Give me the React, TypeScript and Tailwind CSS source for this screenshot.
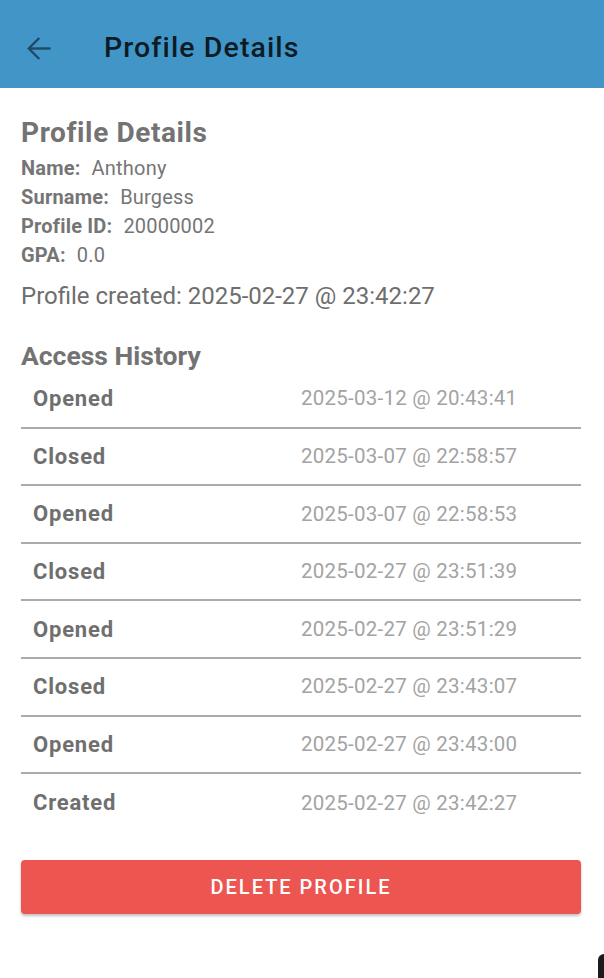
const history = [
  { action: 'Opened', at: '2025-03-12 @ 20:43:41' },
  { action: 'Closed', at: '2025-03-07 @ 22:58:57' },
  { action: 'Opened', at: '2025-03-07 @ 22:58:53' },
  { action: 'Closed', at: '2025-02-27 @ 23:51:39' },
  { action: 'Opened', at: '2025-02-27 @ 23:51:29' },
  { action: 'Closed', at: '2025-02-27 @ 23:43:07' },
  { action: 'Opened', at: '2025-02-27 @ 23:43:00' },
  { action: 'Created', at: '2025-02-27 @ 23:42:27' },
]

const details = [
  { label: 'Name:', value: 'Anthony' },
  { label: 'Surname:', value: 'Burgess' },
  { label: 'Profile ID:', value: '20000002' },
  { label: 'GPA:', value: '0.0' },
]

export default function App() {
  return (
    <div className="relative h-[978px] w-[604px] overflow-hidden bg-white font-['Roboto',sans-serif]">
      {/* app bar */}
      <div className="flex h-[88px] items-center bg-[#4296c7] pt-[8px]">
        <div className="flex w-[104px] pl-[27px]">
          <svg width="24" height="25" viewBox="0 0 24 25" fill="none" stroke="#1f4a66" strokeWidth="2.4">
            <path d="M23.5 12.5H2" />
            <path d="M12.3 2 1.8 12.5 12.3 23" />
          </svg>
        </div>
        <h1 className="text-[28.5px] leading-[34px] font-medium tracking-[1.1px] text-[#0c1b25]">Profile Details</h1>
      </div>

      <div className="pt-[29px] pr-[23px] pl-[21px]">
        <h2 className="text-[28px] leading-[32px] font-bold tracking-[0.6px] text-[#737373]">Profile Details</h2>
        <div className="mt-[4px] flex flex-col">
          {details.map((d) => (
            <div key={d.label} className="flex h-[29px] items-center text-[20px] tracking-[0.2px] text-[#757575]">
              <span className="font-bold">{d.label}</span>
              <span className="ml-[11px]">{d.value}</span>
            </div>
          ))}
        </div>
        <p className="mt-[11px] text-[24px] leading-[32px] text-[#6e6e6e]">Profile created: 2025-02-27 @ 23:42:27</p>

        <h3 className="mt-[29px] text-[26.5px] leading-[30px] font-bold text-[#737373]">Access History</h3>

        <div className="flex flex-col">
          {history.map((h, i) => (
            <div
              key={i}
              className={`grid h-[57.6px] grid-cols-2 items-center ${
                i < history.length - 1 ? 'border-b-2 border-[#ababab]' : ''
              }`}
            >
              <span className="pl-[12px] text-[22px] font-bold tracking-[0.8px] text-[#6f6f6f]">{h.action}</span>
              <span className="text-[20.5px] tracking-[0.25px] text-[#a3a3a3]">{h.at}</span>
            </div>
          ))}
        </div>

        <button className="mt-[28px] flex h-[54px] w-full items-center justify-center rounded-[4px] bg-[#ec5550] text-[20px] font-medium tracking-[2px] text-white shadow-[0_2px_3px_rgba(0,0,0,0.25)]">
          DELETE PROFILE
        </button>
      </div>

      <div className="absolute right-[-6px] bottom-[-8px] h-[32px] w-[12px] rounded-[6px] bg-[#1b1b1b]" />
    </div>
  )
}
